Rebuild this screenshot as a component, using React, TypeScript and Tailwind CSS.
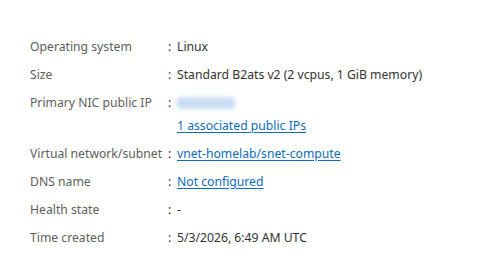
export default function App() {
  const rows: { label: string; value: React.ReactNode }[] = [
    { label: "Operating system", value: <span>Linux</span> },
    { label: "Size", value: <span>Standard B2ats v2 (2 vcpus, 1 GiB memory)</span> },
    {
      label: "Primary NIC public IP",
      value: (
        <div className="flex flex-col">
          <div className="h-5 flex items-center">
            <div className="w-[58px] h-[12px] bg-[#c9dcf3] rounded-sm blur-[2px]" />
          </div>
          <a href="#" className="mt-[3px] text-[#0f6cbd] underline underline-offset-2">1 associated public IPs</a>
        </div>
      ),
    },
    {
      label: "Virtual network/subnet",
      value: <a href="#" className="text-[#0f6cbd] underline underline-offset-2">vnet-homelab/snet-compute</a>,
    },
    {
      label: "DNS name",
      value: <a href="#" className="text-[#0f6cbd] underline underline-offset-2">Not configured</a>,
    },
    { label: "Health state", value: <span>-</span> },
    { label: "Time created", value: <span>5/3/2026, 6:49 AM UTC</span> },
  ];

  return (
    <main className="w-[488px] h-[277px] bg-white pt-[37px] pl-[30px] font-['Segoe_UI','Noto_Sans',sans-serif] text-[12.2px] leading-5">
      <div className="grid grid-cols-[138px_9px_1fr] gap-y-2">
        {rows.map((row) => (
          <div key={row.label} className="contents">
            <div className="text-[#605e5c] whitespace-nowrap">{row.label}</div>
            <div className="text-[#323130]">:</div>
            <div className="text-[#323130] whitespace-nowrap">{row.value}</div>
          </div>
        ))}
      </div>
    </main>
  );
}
